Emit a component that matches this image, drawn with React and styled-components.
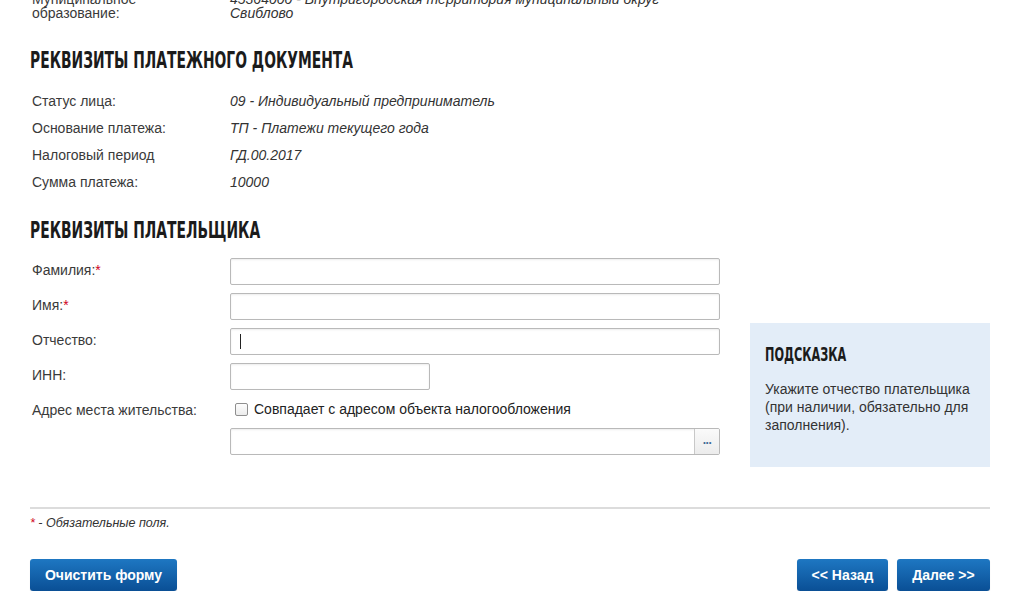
import React from 'react';
import styled, { createGlobalStyle } from 'styled-components';

const Global = createGlobalStyle`
  html, body {
    margin: 0;
    padding: 0;
    background: #ffffff;
    overflow: hidden;
  }
  body {
    font-family: 'Liberation Sans', Arial, sans-serif;
    font-size: 14px;
    color: #333333;
  }
`;

const Page = styled.div`
  width: 960px;
  padding-left: 30px;
  margin-top: -8px;
`;

const Heading = styled.h2`
  margin: ${(p) => p.$top}px 0 0;
  height: 28px;
  line-height: 28px;
  font-family: 'DejaVu Sans Condensed', 'Liberation Sans Narrow', sans-serif;
  font-weight: bold;
  font-size: 23px;
  color: #1b1b1b;
  white-space: nowrap;
  transform: scaleX(0.67);
  transform-origin: left center;
`;

const InfoRow = styled.div`
  display: grid;
  grid-template-columns: 198px 1fr;
  padding-left: 2px;
  line-height: ${(p) => (p.$tall ? '14px' : '27px')};
`;

const Label = styled.span`
  color: #3a3a3a;
`;

const Value = styled.span`
  font-style: italic;
  color: #333333;
`;

const Req = styled.span`
  color: #d0021b;
`;

const Details = styled.div`
  margin-top: 14px;
`;

const FormArea = styled.div`
  display: flex;
  align-items: flex-start;
  gap: 30px;
  margin-top: 14px;
`;

const Fields = styled.div`
  display: flex;
  flex-direction: column;
  gap: 8px;
  width: 690px;
`;

const FieldRow = styled.div`
  display: grid;
  grid-template-columns: 198px 490px;
  padding-left: 2px;
  align-items: start;
`;

const FieldLabel = styled.span`
  color: #3a3a3a;
  line-height: 24px;
`;

const Input = styled.div`
  box-sizing: border-box;
  width: ${(p) => p.$w || 490}px;
  height: 27px;
  border: 1px solid #b9b9b9;
  border-radius: 2px;
  background: #fff;
  box-shadow: inset 0 1px 2px rgba(0, 0, 0, 0.08);
  display: flex;
  align-items: center;
  padding-left: 9px;
`;

const Caret = styled.span`
  width: 1px;
  height: 15px;
  background: #222;
`;

const Stack = styled.div`
  display: flex;
  flex-direction: column;
  gap: 8px;
`;

const CheckLine = styled.label`
  display: flex;
  align-items: center;
  gap: 6px;
  height: 22px;
  padding-left: 5px;
  color: #222;
`;

const Box = styled.span`
  box-sizing: border-box;
  width: 13px;
  height: 13px;
  border: 1px solid #8f8f8f;
  border-radius: 2px;
  background: linear-gradient(#fdfdfd, #ececec);
`;

const AddrInput = styled(Input)`
  padding: 0;
  justify-content: flex-end;
  overflow: hidden;
`;

const DotsButton = styled.span`
  width: 25px;
  height: 100%;
  border-left: 1px solid #c8c8c8;
  background: linear-gradient(#fafafa, #ececec);
  display: flex;
  align-items: center;
  justify-content: center;
  color: #3f6a96;
  font-size: 12px;
  font-weight: bold;
  letter-spacing: -0.5px;
  line-height: 1;
  padding-bottom: 3px;
  box-sizing: border-box;
`;

const Hint = styled.aside`
  margin-top: 65px;
  width: 240px;
  height: 144px;
  box-sizing: border-box;
  background: #e3edf8;
  padding: 18px 15px;
`;

const HintTitle = styled.div`
  font-family: 'DejaVu Sans Condensed', 'Liberation Sans Narrow', sans-serif;
  font-weight: bold;
  font-size: 19px;
  line-height: 26px;
  color: #1b1b1b;
  transform: scaleX(0.66);
  transform-origin: left center;
  white-space: nowrap;
`;

const HintText = styled.p`
  margin: 13px 0 0;
  line-height: 18px;
  color: #333;
`;

const Divider = styled.hr`
  margin: 40px 0 0;
  border: 0;
  border-top: 2px solid #dcdcdc;
`;

const Note = styled.div`
  margin-top: 6px;
  font-size: 12.5px;
  font-style: italic;
  color: #333;
  line-height: 16px;
`;

const Actions = styled.div`
  display: flex;
  justify-content: space-between;
  margin-top: 28px;
`;

const Group = styled.div`
  display: flex;
  gap: 9px;
`;

const Button = styled.button`
  height: 32px;
  width: ${(p) => p.$w}px;
  border: 0;
  border-radius: 3px;
  background: linear-gradient(#1e77c2, #0a4f95);
  color: #ffffff;
  font-family: 'Liberation Sans', Arial, sans-serif;
  font-weight: bold;
  font-size: 14px;
  padding: 0;
  cursor: pointer;
  box-shadow: 0 1px 1px rgba(0, 0, 0, 0.15);
`;

function App() {
  return (
    <>
      <Global />
      <Page>
        <InfoRow $tall>
          <Label>
            Муниципальное
            <br />
            образование:
          </Label>
          <Value>
            45364000 - Внутригородская территория муниципальный округ
            <br />
            Свиблово
          </Value>
        </InfoRow>

        <Heading $top={26}>РЕКВИЗИТЫ ПЛАТЕЖНОГО ДОКУМЕНТА</Heading>
        <Details>
          <InfoRow>
            <Label>Статус лица:</Label>
            <Value>09 - Индивидуальный предприниматель</Value>
          </InfoRow>
          <InfoRow>
            <Label>Основание платежа:</Label>
            <Value>ТП - Платежи текущего года</Value>
          </InfoRow>
          <InfoRow>
            <Label>Налоговый период</Label>
            <Value>ГД.00.2017</Value>
          </InfoRow>
          <InfoRow>
            <Label>Сумма платежа:</Label>
            <Value>10000</Value>
          </InfoRow>
        </Details>

        <Heading $top={20}>РЕКВИЗИТЫ ПЛАТЕЛЬЩИКА</Heading>
        <FormArea>
          <Fields>
            <FieldRow>
              <FieldLabel>
                Фамилия:<Req>*</Req>
              </FieldLabel>
              <Input />
            </FieldRow>
            <FieldRow>
              <FieldLabel>
                Имя:<Req>*</Req>
              </FieldLabel>
              <Input />
            </FieldRow>
            <FieldRow>
              <FieldLabel>Отчество:</FieldLabel>
              <Input>
                <Caret />
              </Input>
            </FieldRow>
            <FieldRow>
              <FieldLabel>ИНН:</FieldLabel>
              <Input $w={200} />
            </FieldRow>
            <FieldRow>
              <FieldLabel>Адрес места жительства:</FieldLabel>
              <Stack>
                <CheckLine>
                  <Box />
                  Совпадает с адресом объекта налогообложения
                </CheckLine>
                <AddrInput>
                  <DotsButton>...</DotsButton>
                </AddrInput>
              </Stack>
            </FieldRow>
          </Fields>
          <Hint>
            <HintTitle>ПОДСКАЗКА</HintTitle>
            <HintText>
              Укажите отчество плательщика (при наличии, обязательно для
              заполнения).
            </HintText>
          </Hint>
        </FormArea>

        <Divider />
        <Note>
          <Req>*</Req> - Обязательные поля.
        </Note>

        <Actions>
          <Button $w={147}>Очистить форму</Button>
          <Group>
            <Button $w={91}>&lt;&lt; Назад</Button>
            <Button $w={93}>Далее &gt;&gt;</Button>
          </Group>
        </Actions>
      </Page>
    </>
  );
}

export default App;
